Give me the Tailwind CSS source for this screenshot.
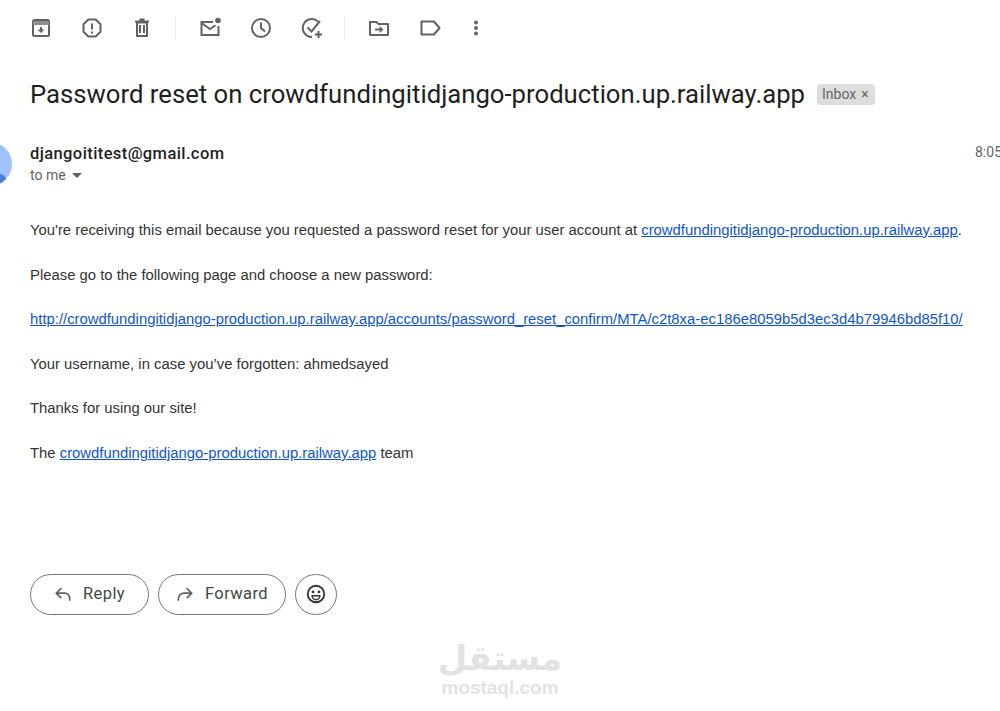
<!DOCTYPE html>
<html lang="en">
<head>
    <meta charset="UTF-8">
    <meta name="viewport" content="width=device-width, initial-scale=1.0">
    <title>Password reset</title>
    <script src="https://cdn.jsdelivr.net/npm/@tailwindcss/browser@4"></script>
</head>
<body class="bg-white h-[711px] w-[1000px] overflow-hidden relative font-['Roboto',sans-serif]">
    <!-- Toolbar -->
    <div class="h-[56px] pl-[29px] flex items-center text-[#5f6368]">
        <div class="w-[24px] h-[24px]"><svg viewBox="0 0 24 24" width="24" height="24" fill="none" stroke="currentColor" stroke-width="2"><rect x="4" y="4" width="16" height="16" rx="1.5"/><path d="M4 7h16" stroke-width="4" stroke="#8a8d91"/><path fill="currentColor" stroke="none" d="M11 11h2v2.500h2.500L12 17 8.500 13.500H11z"/></svg></div>
        <div class="w-[24px] h-[24px] ml-[27px]"><svg viewBox="0 0 24 24" width="24" height="24" fill="none" stroke="currentColor" stroke-width="2"><path d="M8.300 3.500h7.400l4.800 4.800v7.400l-4.800 4.800H8.300l-4.800-4.800V8.300z" stroke-linejoin="round"/><path d="M12 7.500v6M12 15.500v2"/></svg></div>
        <div class="w-[24px] h-[24px] ml-[26px]"><svg viewBox="0 0 24 24" width="24" height="24" fill="none" stroke="currentColor" stroke-width="2"><path d="M7 6.500h10V20H7zM5 5.500h14M9.500 3.500h5M10 9v8M14 9v8"/></svg></div>
        <div class="w-px h-[24px] bg-[#eeeeee] ml-[21px]"></div>
        <div class="w-[24px] h-[24px] ml-[22px]"><svg viewBox="0 0 24 24" width="24" height="24" fill="none" stroke="currentColor" stroke-width="2"><path d="M15 6H3.500v13h17v-9M3.500 7l8.500 6 5.500-3.800"/><circle cx="20" cy="4.500" r="2.800" fill="currentColor" stroke="none"/></svg></div>
        <div class="w-[24px] h-[24px] ml-[27px]"><svg viewBox="0 0 24 24" width="24" height="24" fill="none" stroke="currentColor" stroke-width="2"><circle cx="12" cy="12" r="9"/><path d="M12 6.500V12l4 3.500"/></svg></div>
        <div class="w-[24px] h-[24px] ml-[27px]"><svg viewBox="0 0 24 24" width="24" height="24" fill="none" stroke="currentColor" stroke-width="2"><path d="M18 5.500A9 9 0 1 0 12 21"/><path d="M7.500 11.500l4 4 8.500-10.500M15 18.500h7M18.500 15v7"/></svg></div>
        <div class="w-px h-[24px] bg-[#eeeeee] ml-[20px]"></div>
        <div class="w-[24px] h-[24px] ml-[22px]"><svg viewBox="0 0 24 24" width="24" height="24" fill="none" stroke="currentColor" stroke-width="2"><path d="M3 6V19h18V8H11.500l-2-2H3z" stroke-linejoin="round"/><path d="M8 13.500h5" /><path fill="currentColor" stroke="none" d="M12.500 10l4 3.500-4 3.500z"/></svg></div>
        <div class="w-[24px] h-[24px] ml-[27px]"><svg viewBox="0 0 24 24" width="24" height="24" fill="none" stroke="currentColor" stroke-width="2"><path d="M3.500 5.500h12.500l5.500 6.500-5.500 6.500H3.500z" stroke-linejoin="round"/></svg></div>
        <div class="w-[24px] h-[24px] ml-[22px]"><svg viewBox="0 0 24 24" width="24" height="24" fill="currentColor"><circle cx="12" cy="6.500" r="2"/><circle cx="12" cy="12" r="2"/><circle cx="12" cy="17.500" r="2"/></svg></div>
    </div>

    <!-- Subject -->
    <div class="pl-[30px] mt-[19px] flex items-center h-[38px]">
        <h1 class="text-[25.700px] leading-[38px] text-[#1f1f1f] font-normal whitespace-nowrap">Password reset on crowdfundingitidjango-production.up.railway.app</h1>
        <span class="ml-[12px] h-[21px] w-[58px] bg-[#dddddd] rounded-[4px] flex items-center pl-[5px] text-[14px] text-[#666666]">Inbox<span class="ml-[5px] text-[14px] leading-none">×</span></span>
    </div>

    <!-- Sender -->
    <div class="pl-[30px] mt-[29px] relative">
        <div class="text-[16.500px] leading-[24px] font-medium text-[#1f1f1f] tracking-[0.4px]">djangoititest@gmail.com</div>
        <div class="flex items-center text-[14px] leading-[20px] text-[#5f6368] -mt-px">to me
            <span class="ml-[6px] w-0 h-0 border-l-[5px] border-r-[5px] border-t-[5px] border-l-transparent border-r-transparent border-t-[#5f6368]"></span>
        </div>
        <span class="absolute left-[975px] top-0 text-[14px] leading-[20px] text-[#5f6368] whitespace-nowrap">8:05</span>
        <!-- Avatar -->
        <div class="absolute left-[-32px] top-0 w-[44px] h-[44px] rounded-full bg-[#a0c3ff] overflow-hidden">
            <div class="absolute left-[26px] top-[32px] w-[12px] h-[12px] rounded-full bg-[#4b7fd6]"></div>
        </div>
    </div>

    <!-- Body -->
    <div class="pl-[30px] mt-[35px] text-[14.850px] leading-[20px] text-[#333333] font-['Liberation_Sans',sans-serif] whitespace-nowrap flex flex-col gap-[24.600px]">
        <p>You're receiving this email because you requested a password reset for your user account at <a class="text-[#1155cc] underline">crowdfundingitidjango-production.up.railway.app</a>.</p>
        <p>Please go to the following page and choose a new password:</p>
        <p><a class="text-[#1155cc] underline">http://crowdfundingitidjango-production.up.railway.app/accounts/password_reset_confirm/MTA/c2t8xa-ec186e8059b5d3ec3d4b79946bd85f10/</a></p>
        <p>Your username, in case you’ve forgotten: ahmedsayed</p>
        <p>Thanks for using our site!</p>
        <p>The <a class="text-[#1155cc] underline">crowdfundingitidjango-production.up.railway.app</a> team</p>
    </div>

    <!-- Actions -->
    <div class="pl-[30px] mt-[111px] flex items-center text-[#444746]">
        <button class="h-[41px] w-[119px] rounded-full border border-[#747775] flex items-center pl-[22px] text-[16.500px] tracking-[0.4px] font-normal">
            <svg viewBox="0 0 24 24" width="20" height="20" fill="none" stroke="#5f6368" stroke-width="2"><path d="M10 5l-6 6 6 6M4 11h10a6 6 0 0 1 6 6v3"/></svg>
            <span class="ml-[10px]">Reply</span>
        </button>
        <button class="ml-[9px] h-[41px] w-[128px] rounded-full border border-[#747775] flex items-center pl-[16px] text-[16.500px] tracking-[0.4px] font-normal">
            <svg viewBox="0 0 24 24" width="20" height="20" fill="none" stroke="#5f6368" stroke-width="2"><path d="M14 5l6 6-6 6M20 11h-9a7 7 0 0 0-7 7v2"/></svg>
            <span class="ml-[10px]">Forward</span>
        </button>
        <button class="ml-[9px] h-[41px] w-[42px] rounded-full border border-[#747775] flex items-center justify-center">
            <svg viewBox="0 0 24 24" width="22" height="22" fill="none" stroke="#333333" stroke-width="2"><circle cx="12" cy="12" r="9"/><circle cx="8.800" cy="9.800" r="1.500" fill="#333333" stroke="none"/><circle cx="15.200" cy="9.800" r="1.500" fill="#333333" stroke="none"/><path d="M7.800 14h8.400a4.200 4.200 0 0 1-8.400 0z" stroke-width="1.600"/></svg>
        </button>
    </div>

    <!-- Watermark -->
    <div class="absolute left-[420px] top-[640px] w-[160px] text-center text-[#e2e2e2] font-bold">
        <div dir="rtl" lang="ar" class="text-[34px] leading-[36px] font-['DejaVu_Sans',sans-serif]">مستقل</div>
        <div class="mt-[2px] text-[19px] leading-[20px] font-['Liberation_Sans',sans-serif]">mostaql.com</div>
    </div>
</body>
</html>
